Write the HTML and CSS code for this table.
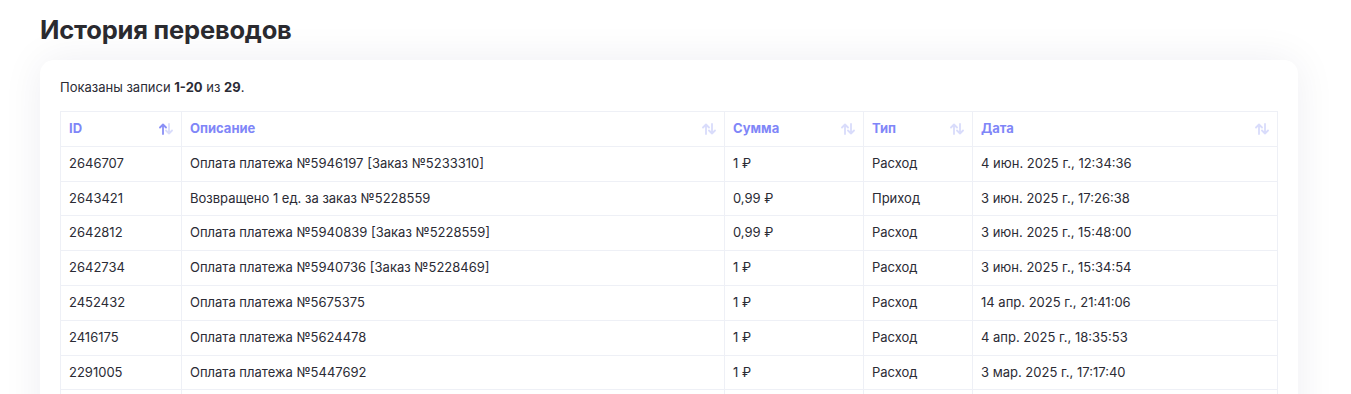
FILE: index.html
```html
<!DOCTYPE html>
<html lang="ru">
<head>
    <meta charset="UTF-8">
    <title>История переводов</title>
    <link rel="stylesheet" href="styles.css">
</head>
<body>
    <div class="page">
        <h1 class="page-title">История переводов</h1>
        <div class="card">
            <div class="summary">Показаны записи <b>1-20</b> из <b>29</b>.</div>
            <table class="grid">
                <colgroup>
                    <col class="col-id">
                    <col class="col-desc">
                    <col class="col-sum">
                    <col class="col-type">
                    <col class="col-date">
                </colgroup>
                <thead>
                    <tr>
                        <th><div class="th-inner"><span>ID</span><svg class="sort active" viewBox="0 0 14 12"><path class="up" d="M4 11V1.5M1 4.5l3-3 3 3"/><path class="down" d="M10 1v9.5M7 7.5l3 3 3-3"/></svg></div></th>
                        <th><div class="th-inner"><span>Описание</span><svg class="sort" viewBox="0 0 14 12"><path class="up" d="M4 11V1.5M1 4.5l3-3 3 3"/><path class="down" d="M10 1v9.5M7 7.5l3 3 3-3"/></svg></div></th>
                        <th><div class="th-inner"><span>Сумма</span><svg class="sort" viewBox="0 0 14 12"><path class="up" d="M4 11V1.5M1 4.5l3-3 3 3"/><path class="down" d="M10 1v9.5M7 7.5l3 3 3-3"/></svg></div></th>
                        <th><div class="th-inner"><span>Тип</span><svg class="sort" viewBox="0 0 14 12"><path class="up" d="M4 11V1.5M1 4.5l3-3 3 3"/><path class="down" d="M10 1v9.5M7 7.5l3 3 3-3"/></svg></div></th>
                        <th><div class="th-inner"><span>Дата</span><svg class="sort" viewBox="0 0 14 12"><path class="up" d="M4 11V1.5M1 4.5l3-3 3 3"/><path class="down" d="M10 1v9.5M7 7.5l3 3 3-3"/></svg></div></th>
                    </tr>
                </thead>
                <tbody>
                    <tr><td>2646707</td><td>Оплата платежа №5946197 [Заказ №5233310]</td><td>1 ₽</td><td>Расход</td><td>4 июн. 2025 г., 12:34:36</td></tr>
                    <tr><td>2643421</td><td>Возвращено 1 ед. за заказ №5228559</td><td>0,99 ₽</td><td>Приход</td><td>3 июн. 2025 г., 17:26:38</td></tr>
                    <tr><td>2642812</td><td>Оплата платежа №5940839 [Заказ №5228559]</td><td>0,99 ₽</td><td>Расход</td><td>3 июн. 2025 г., 15:48:00</td></tr>
                    <tr><td>2642734</td><td>Оплата платежа №5940736 [Заказ №5228469]</td><td>1 ₽</td><td>Расход</td><td>3 июн. 2025 г., 15:34:54</td></tr>
                    <tr><td>2452432</td><td>Оплата платежа №5675375</td><td>1 ₽</td><td>Расход</td><td>14 апр. 2025 г., 21:41:06</td></tr>
                    <tr><td>2416175</td><td>Оплата платежа №5624478</td><td>1 ₽</td><td>Расход</td><td>4 апр. 2025 г., 18:35:53</td></tr>
                    <tr><td>2291005</td><td>Оплата платежа №5447692</td><td>1 ₽</td><td>Расход</td><td>3 мар. 2025 г., 17:17:40</td></tr>
                    <tr><td>&nbsp;</td><td>&nbsp;</td><td>&nbsp;</td><td>&nbsp;</td><td>&nbsp;</td></tr>
                </tbody>
            </table>
        </div>
    </div>
</body>
</html>
```

FILE: styles.css
```css
body {
    margin: 0;
    padding: 0;
    background-color: #ffffff;
    font-family: 'Inter', 'Noto Sans', sans-serif;
    color: #2b2b35;
}

.page {
    padding: 12px 40px 0;
    max-width: 1258px;
}

.page-title {
    margin: 0 0 13px;
    font-size: 25.5px;
    line-height: 35px;
    font-weight: 700;
    color: #2a2a2f;
    letter-spacing: -0.2px;
}

.card {
    background-color: #ffffff;
    border-radius: 14px;
    padding: 18px 20px 20px;
    box-shadow: 0 0 40px rgba(30, 35, 70, 0.07);
}

.summary {
    font-size: 13px;
    line-height: 18px;
    margin-bottom: 15px;
}

.summary b {
    font-weight: 700;
}

.grid {
    width: 100%;
    border-collapse: collapse;
    table-layout: fixed;
    font-size: 13px;
}

.col-id { width: 121px; }
.col-desc { width: 543px; }
.col-sum { width: 139px; }
.col-type { width: 109px; }

.grid th,
.grid td {
    border: 1px solid #eef0f6;
    padding: 8px 8px;
    line-height: 17.8px;
    text-align: left;
    white-space: nowrap;
}

.grid th {
    color: #7f86f8;
    font-weight: 700;
}

.th-inner {
    display: flex;
    align-items: center;
    justify-content: space-between;
}

.sort {
    width: 14px;
    height: 12px;
    fill: none;
    stroke-width: 1.8;
    stroke-linecap: round;
    stroke-linejoin: round;
}

.sort path {
    stroke: #d9dcfb;
}

.sort.active .up {
    stroke: #8a90f6;
}
```
